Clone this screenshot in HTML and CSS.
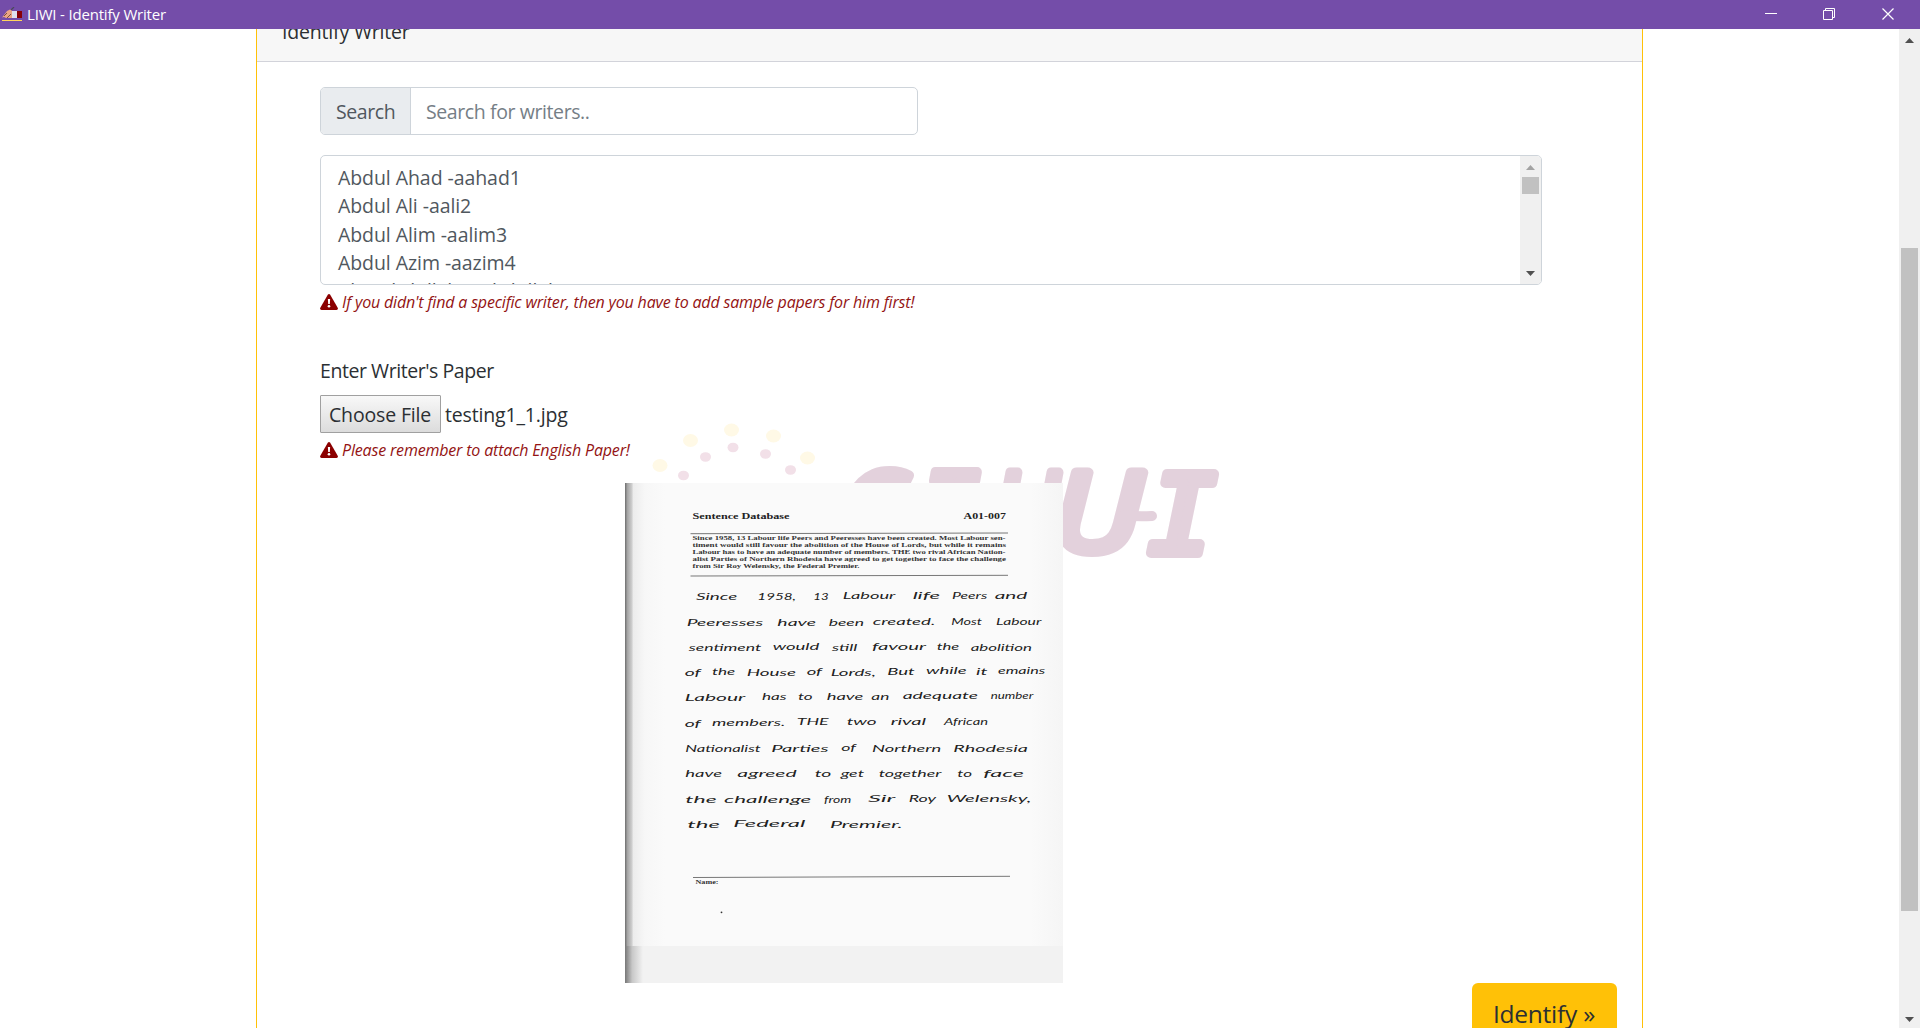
FILE: index.html
```html
<!DOCTYPE html>
<html lang="en">
<head>
<meta charset="utf-8">
<title>LIWI - Identify Writer</title>
<link rel="stylesheet" href="styles.css">
</head>
<body>
<header class="titlebar">
  <svg class="app-icon" width="20" height="15" viewBox="0 0 20 15">
    <path d="M0 10.500 2 8 5 4 8 2.500 10 3.500V11H4L2 10Z" fill="#eaa584"/>
    <path d="M9 3 12 0" stroke="#4a4a5a" stroke-width="1.200"/>
    <path d="M2 9 5 6M5 11 9 7" stroke="#75513f"/>
    <path d="M10 4h5v7h-5z" fill="#dfe0ef"/>
    <path d="M15 4h5v7h-5z" fill="#870008"/>
    <path d="M0 13.500h20" stroke="#ffd45c"/>
  </svg>
  <span class="title">LIWI - Identify Writer</span>
  <svg class="controls" width="130" height="14" viewBox="0 0 130 14" fill="none" stroke="#fff">
    <path d="M0 6.500h12"/>
    <path d="M58.500 3.500h9v9h-9zM60.500 3.500v-2h9v9h-2"/>
    <path d="M117.500 1.500l11 11M128.500 1.500l-11 11" stroke-width="1.200"/>
  </svg>
</header>
<div class="viewport">
  <main class="page">
    <section class="card">
      <div class="card-header">Identify Writer</div>
      <div class="card-body">
        <svg class="watermark" width="580" height="150" viewBox="645 420 580 150">
          <g fill="#fff9e6"><ellipse cx="660" cy="465.500" rx="7.500" ry="6.500"/><ellipse cx="690.500" cy="440.500" rx="7.500" ry="6.500"/><ellipse cx="731.500" cy="430" rx="7.500" ry="6.500"/><ellipse cx="773.500" cy="436" rx="7.500" ry="6.500"/><ellipse cx="807.500" cy="458" rx="7.500" ry="6.500"/></g>
          <g fill="#f2e0e8"><ellipse cx="683.500" cy="475.500" rx="5.500" ry="4.800"/><ellipse cx="705.500" cy="457" rx="5.500" ry="4.800"/><ellipse cx="733" cy="447.500" rx="5.500" ry="4.800"/><ellipse cx="765.500" cy="454" rx="5.500" ry="4.800"/><ellipse cx="790.500" cy="470" rx="5.500" ry="4.800"/></g>
          <g class="logo-text">
            <text x="838" y="551" textLength="66" lengthAdjust="spacingAndGlyphs">C</text>
            <text class="mono" x="918" y="551" textLength="62" lengthAdjust="spacingAndGlyphs">I</text>
            <text x="992" y="551" textLength="66" lengthAdjust="spacingAndGlyphs">U</text>
            <text x="1053" y="551" textLength="88" lengthAdjust="spacingAndGlyphs">U</text>
            <text class="mono" x="1148" y="553" textLength="69" lengthAdjust="spacingAndGlyphs">I</text>
          </g>
          <path class="flourish" d="M1124 515q12 2 28 1"/>
        </svg>
        <div class="search">
          <span class="search-label">Search</span>
          <span class="search-input">Search for writers..</span>
        </div>
        <div class="list">
          <div class="options">
            <div>Abdul Ahad -aahad1</div>
            <div>Abdul Ali -aali2</div>
            <div>Abdul Alim -aalim3</div>
            <div>Abdul Azim -aazim4</div>
            <div>Abu Abdullah -aabdullah5</div>
          </div>
          <div class="list-scroll">
            <svg width="9" height="5" viewBox="0 0 9 5"><path d="M0 5 4.500 0 9 5Z" fill="#a3a3a3"/></svg>
            <span class="thumb"></span>
            <svg class="down" width="9" height="5" viewBox="0 0 9 5"><path d="M0 0 4.500 5 9 0Z" fill="#505050"/></svg>
          </div>
        </div>
        <p class="warning">
          <svg width="18" height="16" viewBox="0 0 18 16"><path d="M7.800.7Q9-.7 10.200.7L17.700 13.800Q18.500 15.500 16.500 16H1.500Q-.5 15.500.3 13.800Z" fill="#8b0000"/><path d="M7.900 5h2.200l-.3 5H8.200z" fill="#fff"/><circle cx="9" cy="12.300" r="1.300" fill="#fff"/></svg>
          <span>If you didn't find a specific writer, then you have to add sample papers for him first!</span>
        </p>
        <div class="file-label">Enter Writer's Paper</div>
        <div class="file-row"><span class="file-button">Choose File</span><span class="file-name">testing1_1.jpg</span></div>
        <p class="warning">
          <svg width="18" height="16" viewBox="0 0 18 16"><path d="M7.800.7Q9-.7 10.200.7L17.700 13.800Q18.500 15.500 16.500 16H1.500Q-.5 15.500.3 13.800Z" fill="#8b0000"/><path d="M7.900 5h2.200l-.3 5H8.200z" fill="#fff"/><circle cx="9" cy="12.300" r="1.300" fill="#fff"/></svg>
          <span>Please remember to attach English Paper!</span>
        </p>
        <svg class="paper" width="438" height="500" viewBox="625 483 438 500">
          <defs>
            <linearGradient id="edge"><stop offset="0" stop-color="#6e6e6e"/><stop offset=".06" stop-color="#a5a5a5"/><stop offset=".18" stop-color="#d2d2d2"/><stop offset=".2" stop-color="#ececec"/><stop offset=".5" stop-color="#f7f7f7"/><stop offset="1" stop-color="#fafafa"/></linearGradient>
            <linearGradient id="edge2"><stop offset="0" stop-color="#777"/><stop offset=".4" stop-color="#c8c8c8"/><stop offset="1" stop-color="#f2f2f2"/></linearGradient>
            <linearGradient id="fade"><stop offset="0" stop-color="#f5f5f5" stop-opacity="0"/><stop offset="1" stop-color="#f5f5f5"/></linearGradient>
          </defs>
          <rect x="625" y="483" width="438" height="500" fill="#fafafa"/>
          <rect x="625" y="483" width="40" height="463" fill="url(#edge)"/>
          <rect x="1030" y="483" width="33" height="463" fill="url(#fade)"/>
          <rect x="625" y="946" width="438" height="37" fill="#f2f2f2"/>
          <rect x="625" y="946" width="18" height="37" fill="url(#edge2)"/>
          <g class="print">
            <g class="print-head">
              <text x="692.500" y="519" textLength="97" lengthAdjust="spacingAndGlyphs">Sentence Database</text>
              <text x="963.500" y="518.500" textLength="42.500" lengthAdjust="spacingAndGlyphs">A01-007</text>
            </g>
            <text x="692.500" y="540.300" textLength="313" lengthAdjust="spacingAndGlyphs">Since 1958, 13 Labour life Peers and Peeresses have been created. Most Labour sen-</text>
            <text x="692.500" y="547.300" textLength="313.500" lengthAdjust="spacingAndGlyphs">timent would still favour the abolition of the House of Lords, but while it remains</text>
            <text x="692.500" y="554.300" textLength="313" lengthAdjust="spacingAndGlyphs">Labour has to have an adequate number of members. THE two rival African Nation-</text>
            <text x="692.500" y="561.300" textLength="313.500" lengthAdjust="spacingAndGlyphs">alist Parties of Northern Rhodesia have agreed to get together to face the challenge</text>
            <text x="692.500" y="568.300" textLength="167" lengthAdjust="spacingAndGlyphs">from Sir Roy Welensky, the Federal Premier.</text>
            <text x="695.500" y="884" textLength="23" lengthAdjust="spacingAndGlyphs">Name:</text>
          </g>
          <path d="M690.500 533.700 1008 533M690.500 576 1008 575.300M693 877.500 1010 876.300" stroke="#777" stroke-width="1" fill="none"/>
          <circle cx="721.500" cy="912.300" r=".9" fill="#333"/>
          <g class="hand" transform="translate(610 570.700) scale(.33333)">
            <text x="258" y="89" textLength="124" lengthAdjust="spacingAndGlyphs">Since</text><text x="442" y="89" textLength="116" lengthAdjust="spacingAndGlyphs">1958,</text><text x="610" y="87" textLength="46" lengthAdjust="spacingAndGlyphs">13</text><text x="698" y="86" textLength="158" lengthAdjust="spacingAndGlyphs">Labour</text><text x="908" y="86" textLength="82" lengthAdjust="spacingAndGlyphs">life</text><text x="1026" y="85" textLength="106" lengthAdjust="spacingAndGlyphs">Peers</text><text x="1154" y="84" textLength="98" lengthAdjust="spacingAndGlyphs">and</text>
            <text x="230" y="165" textLength="230" lengthAdjust="spacingAndGlyphs">Peeresses</text><text x="502" y="165" textLength="116" lengthAdjust="spacingAndGlyphs">have</text><text x="656" y="165" textLength="106" lengthAdjust="spacingAndGlyphs">been</text><text x="788" y="163" textLength="188" lengthAdjust="spacingAndGlyphs">created.</text><text x="1024" y="162" textLength="92" lengthAdjust="spacingAndGlyphs">Most</text><text x="1158" y="163" textLength="136" lengthAdjust="spacingAndGlyphs">Labour</text>
            <text x="236" y="240" textLength="218" lengthAdjust="spacingAndGlyphs">sentiment</text><text x="488" y="239" textLength="140" lengthAdjust="spacingAndGlyphs">would</text><text x="666" y="241" textLength="76" lengthAdjust="spacingAndGlyphs">still</text><text x="786" y="239" textLength="162" lengthAdjust="spacingAndGlyphs">favour</text><text x="980" y="237" textLength="68" lengthAdjust="spacingAndGlyphs">the</text><text x="1082" y="240" textLength="184" lengthAdjust="spacingAndGlyphs">abolition</text>
            <text x="224" y="315" textLength="48" lengthAdjust="spacingAndGlyphs">of</text><text x="306" y="314" textLength="70" lengthAdjust="spacingAndGlyphs">the</text><text x="410" y="316" textLength="148" lengthAdjust="spacingAndGlyphs">House</text><text x="590" y="314" textLength="46" lengthAdjust="spacingAndGlyphs">of</text><text x="662" y="315" textLength="136" lengthAdjust="spacingAndGlyphs">Lords,</text><text x="832" y="312" textLength="82" lengthAdjust="spacingAndGlyphs">But</text><text x="948" y="311" textLength="122" lengthAdjust="spacingAndGlyphs">while</text><text x="1098" y="312" textLength="34" lengthAdjust="spacingAndGlyphs">it</text><text x="1164" y="311" textLength="142" lengthAdjust="spacingAndGlyphs">emains</text>
            <text x="224" y="391" textLength="182" lengthAdjust="spacingAndGlyphs">Labour</text><text x="456" y="389" textLength="74" lengthAdjust="spacingAndGlyphs">has</text><text x="564" y="389" textLength="44" lengthAdjust="spacingAndGlyphs">to</text><text x="650" y="388" textLength="110" lengthAdjust="spacingAndGlyphs">have</text><text x="784" y="388" textLength="54" lengthAdjust="spacingAndGlyphs">an</text><text x="878" y="386" textLength="226" lengthAdjust="spacingAndGlyphs">adequate</text><text x="1142" y="384" textLength="128" lengthAdjust="spacingAndGlyphs">number</text>
            <text x="224" y="468" textLength="48" lengthAdjust="spacingAndGlyphs">of</text><text x="306" y="467" textLength="220" lengthAdjust="spacingAndGlyphs">members.</text><text x="560" y="462" textLength="96" lengthAdjust="spacingAndGlyphs">THE</text><text x="710" y="464" textLength="90" lengthAdjust="spacingAndGlyphs">two</text><text x="842" y="464" textLength="106" lengthAdjust="spacingAndGlyphs">rival</text><text x="1002" y="464" textLength="132" lengthAdjust="spacingAndGlyphs">African</text>
            <text x="226" y="545" textLength="226" lengthAdjust="spacingAndGlyphs">Nationalist</text><text x="484" y="543" textLength="172" lengthAdjust="spacingAndGlyphs">Parties</text><text x="694" y="542" textLength="44" lengthAdjust="spacingAndGlyphs">of</text><text x="786" y="543" textLength="208" lengthAdjust="spacingAndGlyphs">Northern</text><text x="1030" y="543" textLength="224" lengthAdjust="spacingAndGlyphs">Rhodesia</text>
            <text x="226" y="619" textLength="110" lengthAdjust="spacingAndGlyphs">have</text><text x="382" y="619" textLength="178" lengthAdjust="spacingAndGlyphs">agreed</text><text x="614" y="618" textLength="50" lengthAdjust="spacingAndGlyphs">to</text><text x="692" y="618" textLength="70" lengthAdjust="spacingAndGlyphs">get</text><text x="806" y="618" textLength="188" lengthAdjust="spacingAndGlyphs">together</text><text x="1042" y="618" textLength="44" lengthAdjust="spacingAndGlyphs">to</text><text x="1120" y="618" textLength="122" lengthAdjust="spacingAndGlyphs">face</text>
            <text x="226" y="696" textLength="94" lengthAdjust="spacingAndGlyphs">the</text><text x="342" y="698" textLength="262" lengthAdjust="spacingAndGlyphs">challenge</text><text x="642" y="696" textLength="82" lengthAdjust="spacingAndGlyphs">from</text><text x="774" y="694" textLength="82" lengthAdjust="spacingAndGlyphs">Sir</text><text x="896" y="694" textLength="82" lengthAdjust="spacingAndGlyphs">Roy</text><text x="1010" y="694" textLength="254" lengthAdjust="spacingAndGlyphs">Welensky,</text>
            <text x="232" y="772" textLength="98" lengthAdjust="spacingAndGlyphs">the</text><text x="370" y="770" textLength="216" lengthAdjust="spacingAndGlyphs">Federal</text><text x="660" y="772" textLength="218" lengthAdjust="spacingAndGlyphs">Premier.</text>
          </g>
        </svg>
        <div class="actions"><span class="identify">Identify »</span></div>
      </div>
    </section>
  </main>
  <div class="page-scroll">
    <svg width="9" height="5" viewBox="0 0 9 5"><path d="M0 5 4.500 0 9 5Z" fill="#505050"/></svg>
    <span class="thumb"></span>
    <svg class="down" width="9" height="5" viewBox="0 0 9 5"><path d="M0 0 4.500 5 9 0Z" fill="#505050"/></svg>
  </div>
</div>
</body>
</html>
```
FILE: styles.css
```css
* { box-sizing: border-box; }
body {
  margin: 0;
  height: 1028px;
  overflow: hidden;
  display: flex;
  flex-direction: column;
  background: #fff;
  color: #2b2f33;
  font: 400 19.5px/30px "Open Sans", "Noto Sans", sans-serif;
}
svg { display: block; flex: none; }
.titlebar {
  flex: none;
  height: 29px;
  display: flex;
  align-items: flex-start;
  background: #744da9;
  color: #fff;
  padding: 7px 25px 0 2px;
}
.title {
  flex: 1;
  margin: -5px 0 0 5px;
  font-size: 15px;
  line-height: 24px;
  letter-spacing: -.18px;
}
.viewport { flex: 1; min-height: 0; display: flex; }
.page { flex: 1; height: 999px; overflow: hidden; }
.card {
  width: 1387px;
  height: 1100px;
  margin: -28px 0 0 256px;
  border: 1px solid #ffc107;
  border-top: 0;
  position: relative;
}
.card-header {
  height: 61px;
  padding: 16px 25px 14px;
  background: #f7f7f7;
  border-bottom: 1px solid #d2d3da;
  letter-spacing: -.18px;
}
.card-body { padding: 25px 25px 0 63px; }
.watermark { position: absolute; left: 388px; top: 419px; z-index: -1; }
.logo-text {
  font: italic 400 109px "Open Sans", sans-serif;
  fill: #e3d1dc;
  stroke: #e3d1dc;
  stroke-width: 10px;
  stroke-linejoin: round;
}
.logo-text .mono { font-family: "DejaVu Sans Mono", monospace; }
.flourish { fill: none; stroke: #e3d1dc; stroke-width: 10px; stroke-linecap: round; }
.search {
  width: 598px;
  height: 48px;
  display: flex;
  border: 1px solid #ced4da;
  border-radius: 5px;
  overflow: hidden;
  line-height: 47px;
}
.search-label {
  width: 90px;
  padding-left: 15px;
  background: #e9ecef;
  border-right: 1px solid #ced4da;
  color: #50575e;
  letter-spacing: -.4px;
}
.search-input { padding-left: 15px; color: #757e86; letter-spacing: -.4px; }
.list {
  width: 1222px;
  height: 130px;
  margin-top: 20px;
  display: flex;
  border: 1px solid #ced4da;
  border-radius: 5px;
  overflow: hidden;
}
.options {
  flex: 1;
  padding: 8px 0 0 17px;
  color: #50575e;
  line-height: 28.300px;
  letter-spacing: -.07px;
}
.list-scroll, .page-scroll {
  width: 21px;
  display: flex;
  flex-direction: column;
  align-items: center;
  background: #f0f0f0;
  padding: 9px 0 8px;
}
.thumb { width: 17px; height: 17px; background: #c1c1c1; margin-top: 7px; }
.down { margin-top: auto; }
.page-scroll { padding-bottom: 6px; }
.page-scroll .thumb { height: 663px; margin-top: 205px; }
.warning {
  margin: 0;
  height: 32px;
  padding-top: 2px;
  display: flex;
  align-items: center;
  gap: 4px;
  color: #8b0000;
  font-size: 16px;
  font-style: italic;
  letter-spacing: -.17px;
}
.warning span { opacity: .92; }
.file-label { margin-top: 39px; letter-spacing: -.44px; }
.file-row { margin-top: 9px; height: 38px; display: flex; gap: 4px; line-height: 37px; letter-spacing: -.16px; }
.file-button {
  width: 121px;
  padding-left: 8px;
  border: 1px solid #a0a0a0;
  border-radius: 1px;
  background: linear-gradient(#f8f8f8, #dcdcdc);
}
.file-name { line-height: 39px; }
.paper { margin: 18px 0 0 305px; }
.print { font: bold 6.500px "Liberation Serif", serif; fill: #333; }
.print-head { font-size: 9.200px; fill: #222; }
.hand { font: italic 30px Lato, sans-serif; fill: #222; }
.actions { display: flex; justify-content: flex-end; }
.identify {
  width: 145px;
  height: 60px;
  padding: 12px 0 0 21px;
  border-radius: 6px;
  background: #ffc107;
  font-size: 24.500px;
  line-height: 38px;
  letter-spacing: -.25px;
}
```
